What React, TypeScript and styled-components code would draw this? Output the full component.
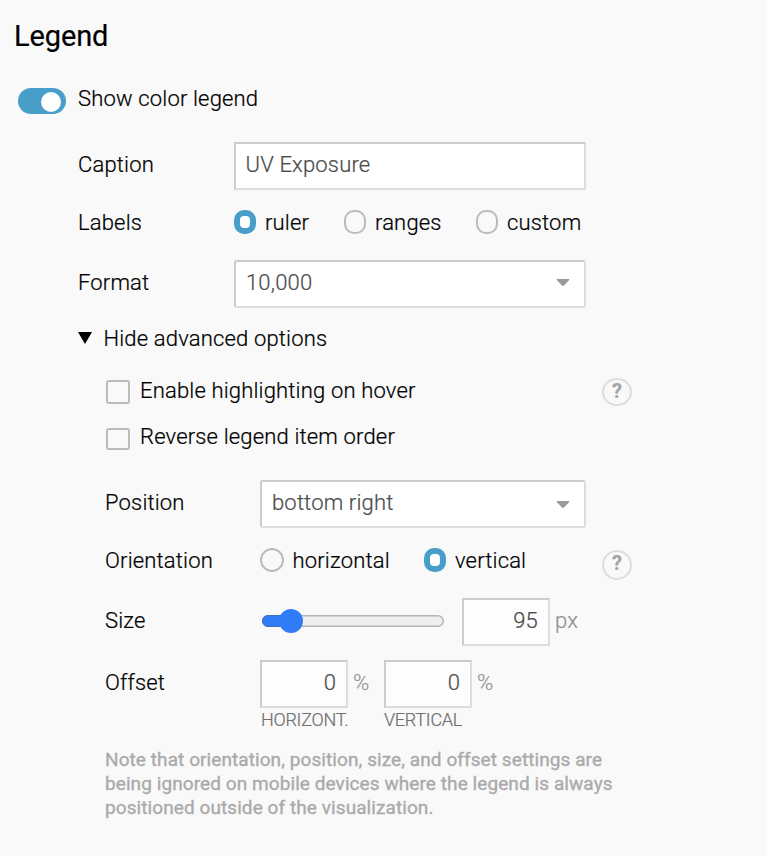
import React from "react";
import styled, { createGlobalStyle } from "styled-components";

const GlobalStyle = createGlobalStyle`
  *, *::before, *::after { box-sizing: border-box; }
  body {
    margin: 0;
    background: #f9f9f9;
    color: #000;
    font-family: Roboto, "Liberation Sans", sans-serif;
    font-weight: 300;
    font-size: 22px;
    line-height: 30px;
    letter-spacing: 0.17px;
    -webkit-text-stroke: 0.22px currentColor;
  }
`;

const Panel = styled.main`
  width: 767px;
  height: 856px;
  overflow: hidden;
  background: #f9f9f9;
`;

const Title = styled.h1`
  margin: 0;
  padding: 18px 0 0 14px;
  height: 84px;
  font-size: 29px;
  line-height: 37px;
  font-weight: 400;
  letter-spacing: -0.12px;
  -webkit-text-stroke: 0.2px #000;
`;

const ToggleRow = styled.div`
  display: flex;
  align-items: flex-start;
  height: 58px;
  padding-left: 18px;
`;

const Toggle = styled.button`
  display: flex;
  justify-content: flex-end;
  width: 48px;
  height: 26px;
  margin: 4px 12px 0 0;
  padding: 4px 5px 0 0;
  border: 0;
  border-radius: 13px;
  background: #479fc9;
`;

const Knob = styled.span`
  width: 20px;
  height: 20px;
  border-radius: 50%;
  background: #fff;
`;

const Text = styled.span`
  white-space: nowrap;
`;

const Settings = styled.div`
  padding-left: 78px;
`;

const Advanced = styled.div`
  padding-left: 27px;
`;

const Row = styled.div<{ $height: number }>`
  display: flex;
  align-items: flex-start;
  height: ${(p) => p.$height}px;
`;

const Label = styled.label<{ $width: number; $top?: number }>`
  flex: none;
  width: ${(p) => p.$width}px;
  padding-top: ${(p) => p.$top ?? 0}px;
`;

const Box = styled.div<{ $width: number; $rounded?: boolean; $numeric?: boolean }>`
  display: flex;
  flex: none;
  justify-content: ${(p) => (p.$numeric ? "flex-end" : "space-between")};
  width: ${(p) => p.$width}px;
  height: 48px;
  padding: ${(p) => (p.$numeric ? "6px 10px" : p.$rounded ? "6px 14.5px 6px 10px" : "6px 9.5px")};
  border: 2px solid #ddd;
  border-top-color: #ccc;
  border-left-color: #ccc;
  border-radius: ${(p) => (p.$rounded ? 3 : 0)}px;
  background: ${(p) => (p.$numeric ? "#fdfdfd" : "#fff")};
  color: #4c4c4c;
`;

const Arrow = styled.svg<{ $top: number }>`
  display: block;
  width: 14px;
  height: 8px;
  margin-top: ${(p) => p.$top}px;
`;

const Choice = styled.label<{ $width: number }>`
  display: flex;
  flex: none;
  width: ${(p) => p.$width}px;
`;

const Radio = styled.span<{ $checked?: boolean; $round?: boolean }>`
  flex: none;
  width: ${(p) => (p.$round ? 24 : 22)}px;
  height: 24px;
  margin: ${(p) => (p.$round ? "2px 8.5px 0 0" : "2px 9px 0 0")};
  border: 2px solid #bbb;
  border-radius: ${(p) => (p.$round ? "50%" : "10px")};
  ${(p) => p.$checked && "border: 6px solid #479fc9; background: #fff;"}
`;

const Disclosure = styled.button`
  display: flex;
  align-items: flex-start;
  height: 52px;
  padding: 0;
  border: 0;
  background: none;
  color: inherit;
  font: inherit;
  letter-spacing: inherit;
`;

const Triangle = styled.svg`
  width: 14px;
  height: 12px;
  margin: 8px 11.5px 0 0;
`;

const Check = styled.span<{ $height: number; $top: number }>`
  flex: none;
  width: 24px;
  height: ${(p) => p.$height}px;
  margin: ${(p) => p.$top}px 10px 0 1px;
  border: 2px solid #bbb;
  border-radius: 3px;
`;

const CheckLabel = styled.label`
  display: flex;
  width: 497px;
`;

const Help = styled.span<{ $height: number; $top: number }>`
  flex: none;
  width: 30px;
  height: ${(p) => p.$height}px;
  margin-top: ${(p) => p.$top}px;
  border: 2px solid #ddd;
  border-radius: 50%;
  color: #a4a4a4;
  font-size: 20px;
  font-weight: 700;
  line-height: 23px;
  letter-spacing: 0;
  text-align: center;
`;

const Slider = styled.svg`
  display: block;
  width: 184px;
  height: 24px;
  margin: 11px 17px 0 1px;
`;

const Unit = styled.span<{ $width: number }>`
  width: ${(p) => p.$width}px;
  padding: 8px 0 0 5px;
  color: #929292;
`;

const Field = styled.div`
  width: 88px;
`;

const SubLabel = styled.div<{ $left: number }>`
  padding-left: ${(p) => p.$left}px;
  color: #6f6f6f;
  font-size: 18px;
  line-height: 24px;
  white-space: nowrap;
  letter-spacing: -0.25px;
`;

const Note = styled.p`
  margin: 0;
  padding-top: 1px;
  color: #aaa;
  font-size: 19px;
  line-height: 24px;
  font-weight: 400;
  letter-spacing: 0.08px;
  -webkit-text-stroke: 0.35px #aaa;
`;

function Select({ width, value, arrowTop }: { width: number; value: string; arrowTop: number }) {
  return (
    <Box $width={width} $rounded>
      <Text>{value}</Text>
      <Arrow $top={arrowTop} viewBox="0 0 14 8">
        <path d="M1.2 0h11.6c.5 0 .7.5.4.9L8 6.5c-.6.6-1.4.6-2 0L.8.9C.5.5.7 0 1.2 0Z" fill="#999" />
      </Arrow>
    </Box>
  );
}

export default function App() {
  return (
    <>
      <GlobalStyle />
      <Panel>
        <Title>Legend</Title>
        <ToggleRow>
          <Toggle aria-label="Show color legend"><Knob /></Toggle>
          <Text>Show color legend</Text>
        </ToggleRow>
        <Settings>
          <Row $height={66}>
            <Label $width={156} $top={8}>Caption</Label>
            <Box $width={352}><Text>UV Exposure</Text></Box>
          </Row>
          <Row $height={52}>
            <Label $width={156}>Labels</Label>
            <Choice $width={110}><Radio $checked /><Text>ruler</Text></Choice>
            <Choice $width={132}><Radio /><Text>ranges</Text></Choice>
            <Choice $width={120}><Radio /><Text>custom</Text></Choice>
          </Row>
          <Row $height={64}>
            <Label $width={156} $top={8}>Format</Label>
            <Select width={352} value="10,000" arrowTop={11} />
          </Row>
          <Disclosure>
            <Triangle viewBox="0 0 14 12"><path d="M0 0h14L7 12Z" fill="#000" /></Triangle>
            <Text>Hide advanced options</Text>
          </Disclosure>
          <Advanced>
            <Row $height={46}>
              <CheckLabel>
                <Check $height={24} $top={4} />
                <Text>Enable highlighting on hover</Text>
              </CheckLabel>
              <Help $height={28} $top={2}>?</Help>
            </Row>
            <Row $height={58}>
              <CheckLabel>
                <Check $height={22} $top={6} />
                <Text>Reverse legend item order</Text>
              </CheckLabel>
            </Row>
            <Row $height={66}>
              <Label $width={155} $top={8}>Position</Label>
              <Select width={326} value="bottom right" arrowTop={13} />
            </Row>
            <Row $height={52}>
              <Label $width={155}>Orientation</Label>
              <Choice $width={164}><Radio $round /><Text>horizontal</Text></Choice>
              <Choice $width={178}><Radio $checked /><Text>vertical</Text></Choice>
              <Help $height={30} $top={4}>?</Help>
            </Row>
            <Row $height={62}>
              <Label $width={155} $top={8}>Size</Label>
              <Slider viewBox="0 0 184 24">
                <rect x="1.75" y="6.75" width="180.5" height="10.5" rx="5.25" fill="#eee" stroke="#b5b5b5" strokeWidth="1.5" />
                <path d="M30 6.5H7a5.5 5.5 0 0 0 0 11H30Z" fill="#2f7cf6" stroke="#3b71c5" />
                <circle cx="30" cy="12" r="12" fill="#2f7cf6" />
              </Slider>
              <Box $width={88} $numeric><Text>95</Text></Box>
              <Unit $width={40}>px</Unit>
            </Row>
            <Row $height={87}>
              <Label $width={155} $top={8}>Offset</Label>
              <Field>
                <Box $width={88} $numeric><Text>0</Text></Box>
                <SubLabel $left={1}>HORIZONT.</SubLabel>
              </Field>
              <Unit $width={36}>%</Unit>
              <Field>
                <Box $width={88} $numeric><Text>0</Text></Box>
                <SubLabel $left={0}>VERTICAL</SubLabel>
              </Field>
              <Unit $width={36}>%</Unit>
            </Row>
            <Note>
              Note that orientation, position, size, and offset settings are<br />
              being ignored on mobile devices where the legend is always<br />
              positioned outside of the visualization.
            </Note>
          </Advanced>
        </Settings>
      </Panel>
    </>
  );
}
